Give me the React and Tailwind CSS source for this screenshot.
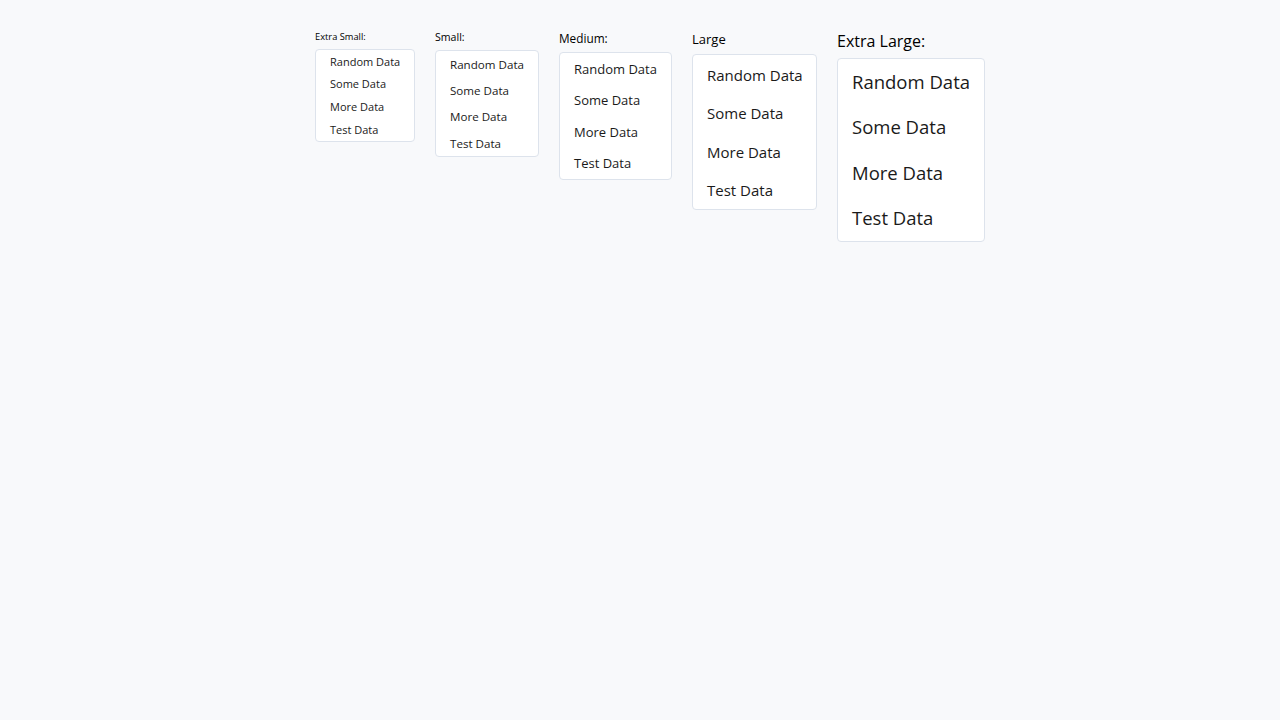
import React from 'react';

const items = ['Random Data', 'Some Data', 'More Data', 'Test Data'];

const sizes = [
    { label: 'Extra Small:', labelCls: 'text-[9.3px] leading-[14px] mt-[1px]', boxCls: 'w-[100px]', itemCls: 'h-[22.75px] text-[11px] pt-[1px]' },
    { label: 'Small:', labelCls: 'text-[10.6px] leading-[16px]', boxCls: 'w-[104px]', itemCls: 'h-[26.25px] text-[11.6px] pt-[1px]' },
    { label: 'Medium:', labelCls: 'text-[11.8px] leading-[18px]', boxCls: 'w-[113px]', itemCls: 'h-[31.5px] text-[13px] pt-[1px]' },
    { label: 'Large', labelCls: 'text-[13px] leading-[20px]', boxCls: 'w-[125px]', itemCls: 'h-[38.5px] text-[15px] pt-[1px]' },
    { label: 'Extra Large:', labelCls: 'text-[16px] leading-[24px]', boxCls: 'w-[148px]', itemCls: 'h-[45.5px] text-[18.5px]' },
];

const App = () => {
    return (
        <div className="min-h-screen bg-[#f8f9fb] font-['Open_Sans',sans-serif] text-[#1a1a1a]">
            <div className="flex items-start justify-center gap-5 pl-5 pt-[29px]">
                {sizes.map((s) => (
                    <div key={s.label} className="flex flex-col">
                        {/* size label */}
                        <span className={`${s.labelCls} mb-[5px] text-black`}>{s.label}</span>
                        <ul className={`${s.boxCls} bg-white border border-[#dde3ec] rounded-[4px]`}>
                            {items.map((it) => (
                                <li key={it} className={`${s.itemCls} flex items-center px-[14px] whitespace-nowrap`}>
                                    {it}
                                </li>
                            ))}
                        </ul>
                    </div>
                ))}
            </div>
        </div>
    );
};

export default App;
